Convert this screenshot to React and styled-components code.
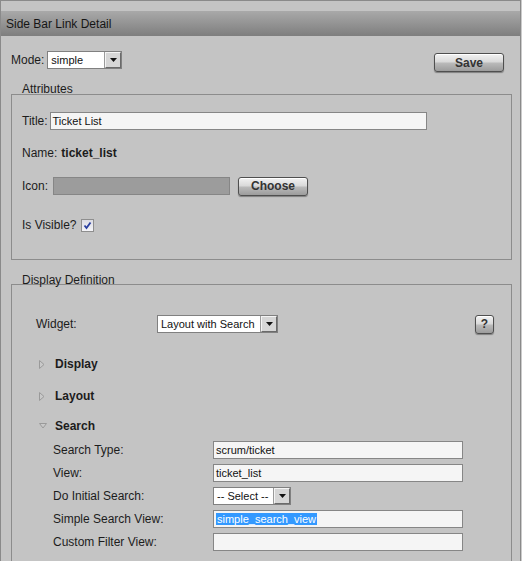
import React from 'react'
import styled, { createGlobalStyle } from 'styled-components'

const GlobalStyle = createGlobalStyle`
  html, body {
    margin: 0;
    padding: 0;
    background: #cbcbcb;
  }
  body {
    font-family: "Liberation Sans", Arial, sans-serif;
    font-size: 12px;
    color: #1c1c1c;
  }
`

const Page = styled.div`
  width: 519px;
  height: 560px;
  overflow: hidden;
  background: #c4c4c4;
  border: 1px solid #8a8a8a;
  border-bottom: none;
`

const Header = styled.div`
  margin-top: 10px;
  height: 25px;
  display: flex;
  align-items: center;
  padding-left: 5px;
  font-size: 12px;
  color: #151515;
  background: linear-gradient(#a9a9a9, #7e7e7e);
`

const Content = styled.div`
  padding: 0 8px 0 10px;
`

const TopRow = styled.div`
  margin-top: 15px;
  display: flex;
  align-items: flex-start;
  justify-content: space-between;
  padding-right: 8px;
`

const Label = styled.span`
  display: inline-block;
  width: ${props => props.$width || 'auto'};
  margin-right: ${props => props.$gap || '0px'};
  font-weight: ${props => (props.$bold ? 'bold' : 'normal')};
  white-space: nowrap;
`

const Inline = styled.div`
  display: flex;
  align-items: center;
  height: ${props => props.$height || '18px'};
`

const SelectBox = styled.div`
  display: inline-flex;
  align-items: center;
  justify-content: space-between;
  box-sizing: border-box;
  width: ${props => props.$width};
  height: 18px;
  background: #ffffff;
  border: 1px solid #808080;
  font-size: 11px;
  color: #111;
  padding-left: 3px;
`

const ArrowBtn = styled.span`
  box-sizing: border-box;
  width: 16px;
  height: 16px;
  display: flex;
  align-items: center;
  justify-content: center;
  background: #d6d6d6;
  border-top: 1px solid #f4f4f4;
  border-left: 1px solid #f4f4f4;
  border-right: 1px solid #6a6a6a;
  border-bottom: 1px solid #6a6a6a;
  box-shadow: -1px 0 0 #9a9a9a;
`

const Button = styled.button`
  box-sizing: border-box;
  width: ${props => props.$width};
  height: 19px;
  margin-top: ${props => props.$mt || '0px'};
  margin-left: ${props => props.$ml || '0px'};
  padding: 0;
  border: 1px solid #4f4f4f;
  border-radius: 3px;
  background: linear-gradient(#f2f2f2 0%, #dadada 45%, #b9b9b9 55%, #9c9c9c 100%);
  box-shadow: 0 1px 1px rgba(0, 0, 0, 0.35), inset 0 1px 0 #ffffff;
  font-family: "Liberation Sans", Arial, sans-serif;
  font-size: 12px;
  font-weight: bold;
  color: #333;
  cursor: pointer;
`

const Legend = styled.div`
  margin-top: ${props => props.$mt};
  padding-left: 11px;
  height: 12px;
  line-height: ${props => props.$lh || '14px'};
  font-size: 12px;
`

const Box = styled.div`
  border: 1px solid #8c8c8c;
  border-bottom: ${props => (props.$open ? 'none' : '1px solid #8c8c8c')};
  padding: ${props => props.$padding};
`

const Row = styled.div`
  display: flex;
  align-items: center;
  justify-content: ${props => props.$justify || 'flex-start'};
  height: ${props => props.$height || '18px'};
  margin-top: ${props => props.$mt || '0px'};
`

const TextInput = styled.div`
  box-sizing: border-box;
  width: ${props => props.$width};
  height: 18px;
  background: ${props => (props.$disabled ? '#9c9c9c' : '#f5f5f5')};
  border: 1px solid #868686;
  font-size: 11px;
  line-height: 16px;
  padding-left: 2px;
  color: #111;
  white-space: nowrap;
  overflow: hidden;
`

const Selected = styled.span`
  background: #3399ff;
  color: #ffffff;
  padding: 0 1px;
`

const Check = styled.span`
  box-sizing: border-box;
  width: 13px;
  height: 13px;
  border: 1px solid #8e8e8e;
  background: linear-gradient(#dcdce4, #f4f4f8);
  display: inline-flex;
  align-items: center;
  justify-content: center;
`

const TreeItem = styled.div`
  display: flex;
  align-items: center;
  height: 18px;
  margin-top: ${props => props.$mt};
  padding-left: 3px;
  font-weight: bold;
  font-size: 12px;
`

const Twisty = styled.span`
  width: 16px;
  display: inline-flex;
  align-items: center;
`

const Fields = styled.div`
  display: flex;
  flex-direction: column;
  gap: 5px;
  margin-top: 6px;
  padding-left: 17px;
`

const Arrow = () => (
  <svg width="7" height="4" viewBox="0 0 7 4">
    <polygon points="0,0 7,0 3.5,4" fill="#111" />
  </svg>
)

const Select = ({ width, children }) => (
  <SelectBox $width={width}>
    <span>{children}</span>
    <ArrowBtn><Arrow /></ArrowBtn>
  </SelectBox>
)

const TwistyIcon = ({ open }) => (
  <Twisty>
    {open ? (
      <svg width="8" height="6" viewBox="0 0 8 6">
        <polygon points="0.5,0.5 7.5,0.5 4,5" fill="#c9c9c9" stroke="#9a9a9a" />
      </svg>
    ) : (
      <svg width="6" height="9" viewBox="0 0 6 9">
        <polygon points="0.5,0.5 5,4.5 0.5,8.5" fill="#c9c9c9" stroke="#9a9a9a" />
      </svg>
    )}
  </Twisty>
)

const searchFields = [
  { label: 'Search Type:', value: 'scrum/ticket' },
  { label: 'View:', value: 'ticket_list' },
  { label: 'Do Initial Search:', select: '-- Select --' },
  { label: 'Simple Search View:', selected: 'simple_search_view' },
  { label: 'Custom Filter View:', value: '' },
]

export default function App() {
  return (
    <Page>
      <GlobalStyle />
      <Header>Side Bar Link Detail</Header>
      <Content>
        <TopRow>
          <Inline>
            <Label $gap="3px">Mode:</Label>
            <Select width="75px">simple</Select>
          </Inline>
          <Button $width="70px" $mt="2px">Save</Button>
        </TopRow>

        <Legend $mt="10px">Attributes</Legend>
        <Box $padding="17px 10px 25px 10px">
          <Row>
            <Label $gap="2px">Title:</Label>
            <TextInput $width="377px">Ticket List</TextInput>
          </Row>
          <Row $mt="14px">
            <Label $gap="4px">Name:</Label>
            <Label $bold>ticket_list</Label>
          </Row>
          <Row $mt="14px" $height="20px">
            <Label $gap="5px">Icon:</Label>
            <TextInput $width="177px" $disabled />
            <Button $width="70px" $ml="8px">Choose</Button>
          </Row>
          <Row $mt="20px">
            <Label $gap="5px">Is Visible?</Label>
            <Check>
              <svg width="9" height="9" viewBox="0 0 9 9">
                <path d="M1.5 4.5 L3.5 7 L7.5 1.5" fill="none" stroke="#2a3fa0" strokeWidth="1.8" />
              </svg>
            </Check>
          </Row>
        </Box>

        <Legend $mt="12px" $lh="17px">Display Definition</Legend>
        <Box $open $padding="29px 17px 40px 24px">
          <Row $justify="space-between" $height="20px">
            <Inline>
              <Label $width="121px">Widget:</Label>
              <Select width="121px">Layout with Search</Select>
            </Inline>
            <Button $width="19px">?</Button>
          </Row>
          <TreeItem $mt="21px"><TwistyIcon />Display</TreeItem>
          <TreeItem $mt="14px"><TwistyIcon />Layout</TreeItem>
          <TreeItem $mt="12px"><TwistyIcon open />Search</TreeItem>
          <Fields>
            {searchFields.map(f => (
              <Row key={f.label}>
                <Label $width="160px">{f.label}</Label>
                {f.select ? (
                  <Select width="78px">{f.select}</Select>
                ) : (
                  <TextInput $width="250px">
                    {f.selected ? <Selected>{f.selected}</Selected> : f.value}
                  </TextInput>
                )}
              </Row>
            ))}
          </Fields>
        </Box>
      </Content>
    </Page>
  )
}
